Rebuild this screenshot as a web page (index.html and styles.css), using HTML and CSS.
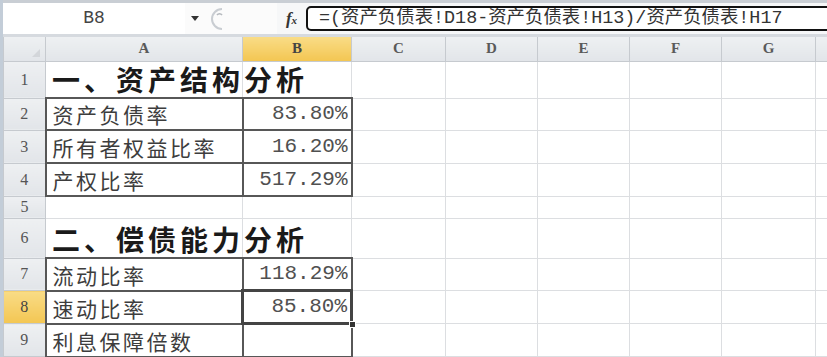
FILE: index.html
```html
<!DOCTYPE html>
<html lang="zh-CN">
	<head>
		<meta charset="UTF-8">
		<title>资产结构分析</title>
		<link rel="stylesheet" href="styles.css">
	</head>
	<body>
		<div class="app">
			<div class="formula-bar">
				<div class="name-box">B8</div>
				<div class="nb-tools">
					<svg class="nb-arrow" width="8" height="5" viewBox="0 0 8 5"><path d="M0 0 L8 0 L4 5 Z" fill="#333"/></svg>
					<svg class="nb-handle" width="18" height="24" viewBox="0 0 18 24">
						<path d="M14 2 A10 10 0 0 0 14 22" fill="none" stroke="#c9cdd2" stroke-width="2"/>
						<path d="M9 8 A3 3 0 0 1 14 8" fill="none" stroke="#b5b9be" stroke-width="1.5"/>
					</svg>
				</div>
				<div class="fx"><i>f</i><span>x</span></div>
				<div class="formula">=(资产负债表!D18-资产负债表!H13)/资产负债表!H17</div>
			</div>

			<table class="sheet">
				<colgroup>
					<col class="c-hd">
					<col class="c-a">
					<col class="c-b">
					<col class="c-c">
					<col class="c-d">
					<col class="c-d">
					<col class="c-d">
					<col class="c-c">
					<col class="c-h">
				</colgroup>
				<thead>
					<tr class="r-head">
						<th class="corner"><span class="tri"></span></th>
						<th>A</th>
						<th class="on">B</th>
						<th>C</th>
						<th>D</th>
						<th>E</th>
						<th>F</th>
						<th>G</th>
						<th></th>
					</tr>
				</thead>
				<tbody>
					<tr class="r-title">
						<th>1</th>
						<td class="title">一、资产结构分析</td>
						<td></td><td></td><td></td><td></td><td></td><td></td><td></td>
					</tr>
					<tr class="r-std">
						<th>2</th>
						<td class="bx name">资产负债率</td>
						<td class="bx num">83.80%</td>
						<td></td><td></td><td></td><td></td><td></td><td></td>
					</tr>
					<tr class="r-std3">
						<th>3</th>
						<td class="bx name">所有者权益比率</td>
						<td class="bx num">16.20%</td>
						<td></td><td></td><td></td><td></td><td></td><td></td>
					</tr>
					<tr class="r-std3">
						<th>4</th>
						<td class="bx name">产权比率</td>
						<td class="bx num">517.29%</td>
						<td></td><td></td><td></td><td></td><td></td><td></td>
					</tr>
					<tr class="r-small">
						<th>5</th>
						<td></td><td></td><td></td><td></td><td></td><td></td><td></td><td></td>
					</tr>
					<tr class="r-title2">
						<th>6</th>
						<td class="title">二、偿债能力分析</td>
						<td></td><td></td><td></td><td></td><td></td><td></td><td></td>
					</tr>
					<tr class="r-std">
						<th>7</th>
						<td class="bx name">流动比率</td>
						<td class="bx num">118.29%</td>
						<td></td><td></td><td></td><td></td><td></td><td></td>
					</tr>
					<tr class="r-std3">
						<th class="on">8</th>
						<td class="bx name">速动比率</td>
						<td class="bx num sel">85.80%</td>
						<td></td><td></td><td></td><td></td><td></td><td></td>
					</tr>
					<tr class="r-std3">
						<th>9</th>
						<td class="bx name">利息保障倍数</td>
						<td class="bx num"></td>
						<td></td><td></td><td></td><td></td><td></td><td></td>
					</tr>
				</tbody>
			</table>
		</div>
	</body>
</html>
```

FILE: styles.css
```css
html, body {
	margin: 0;
	padding: 0;
	background: #ffffff;
	overflow: hidden;
}

.app {
	width: 824px;
	height: 357px;
	border-left: 3px solid #c3cdd8;
	overflow: hidden;
}

/* formula bar */

.formula-bar {
	display: flex;
	align-items: center;
	height: 31px;
	border-top: 3px solid #c9ced4;
	border-bottom: 3px solid #d6dadf;
	background: #f6f7f8;
}

.name-box {
	width: 182px;
	height: 31px;
	line-height: 31px;
	background: #ffffff;
	text-align: center;
	font-family: "Liberation Mono", monospace;
	font-size: 18px;
	color: #444;
}

.nb-tools {
	display: flex;
	align-items: center;
	width: 92px;
	height: 31px;
	background: #fbfbfb;
}

.nb-arrow {
	margin-left: 6px;
}

.nb-handle {
	margin-left: 9px;
}

.fx {
	width: 29px;
	text-align: center;
	font-family: "Liberation Serif", serif;
	color: #333;
	font-weight: bold;
}

.fx i {
	font-size: 17px;
}

.fx span {
	font-size: 11px;
	font-style: italic;
}

.formula {
	flex: 1;
	height: 21px;
	line-height: 21px;
	margin-right: -8px;
	padding-left: 11px;
	border: 2px solid #111;
	border-radius: 5px;
	background: #ffffff;
	font-family: "Liberation Mono", "Noto Sans CJK SC", monospace;
	font-size: 18.4px;
	color: #333;
	white-space: nowrap;
	overflow: hidden;
}

/* sheet */

.sheet {
	border-collapse: collapse;
	table-layout: fixed;
	width: 843px;
}

.c-hd { width: 42px; }
.c-a { width: 197px; }
.c-b { width: 109px; }
.c-c { width: 94px; }
.c-d { width: 92px; }
.c-h { width: 40px; }

.sheet th {
	border: 1px solid #c6cacf;
	background: linear-gradient(#eef0f2, #e2e5e9);
	font-family: "Liberation Serif", serif;
	font-weight: normal;
	font-size: 16px;
	color: #555;
	padding: 0;
	text-align: center;
	vertical-align: middle;
}

.sheet thead th {
	font-weight: bold;
	font-size: 15px;
	color: #5a5a5a;
	border-top: none;
}

.sheet th.on {
	background: linear-gradient(#f9dc86, #f3c653);
	color: #444;
}

.corner {
	position: relative;
}

.corner .tri {
	position: absolute;
	right: 5px;
	bottom: 4px;
	width: 0;
	height: 0;
	border-left: 8px solid transparent;
	border-bottom: 8px solid #d3d6da;
}

.sheet td {
	border: 1px solid #dcdee1;
	padding: 0;
	white-space: nowrap;
	overflow: hidden;
	vertical-align: bottom;
	font-family: "Noto Sans CJK SC", sans-serif;
	color: #3d3d3d;
}

.r-head { height: 24px; }
.r-title { height: 37px; }
.r-std { height: 32px; }
.r-std3 { height: 33px; }
.r-small { height: 22px; }
.r-title2 { height: 40px; }

.sheet td.title {
	overflow: visible;
	padding-left: 6px;
	padding-bottom: 1px;
	font-size: 28px;
	font-weight: bold;
	letter-spacing: 4px;
	line-height: 34px;
	color: #1a1a1a;
}

.sheet td.bx {
	border: 2px solid #575757;
}

.sheet td.name {
	padding-left: 6px;
	font-size: 21px;
	letter-spacing: 2.5px;
	line-height: 30px;
}

.sheet td.num {
	padding-right: 3px;
	text-align: right;
	font-family: "Liberation Mono", monospace;
	font-size: 21px;
	line-height: 30px;
	color: #505050;
}

.sheet td.sel {
	position: relative;
	overflow: visible;
	border: 3px solid #444;
}

.sheet td.sel::after {
	content: "";
	position: absolute;
	right: -6px;
	bottom: -6px;
	width: 5px;
	height: 5px;
	background: #333;
	border: 1px solid #ffffff;
}
```
